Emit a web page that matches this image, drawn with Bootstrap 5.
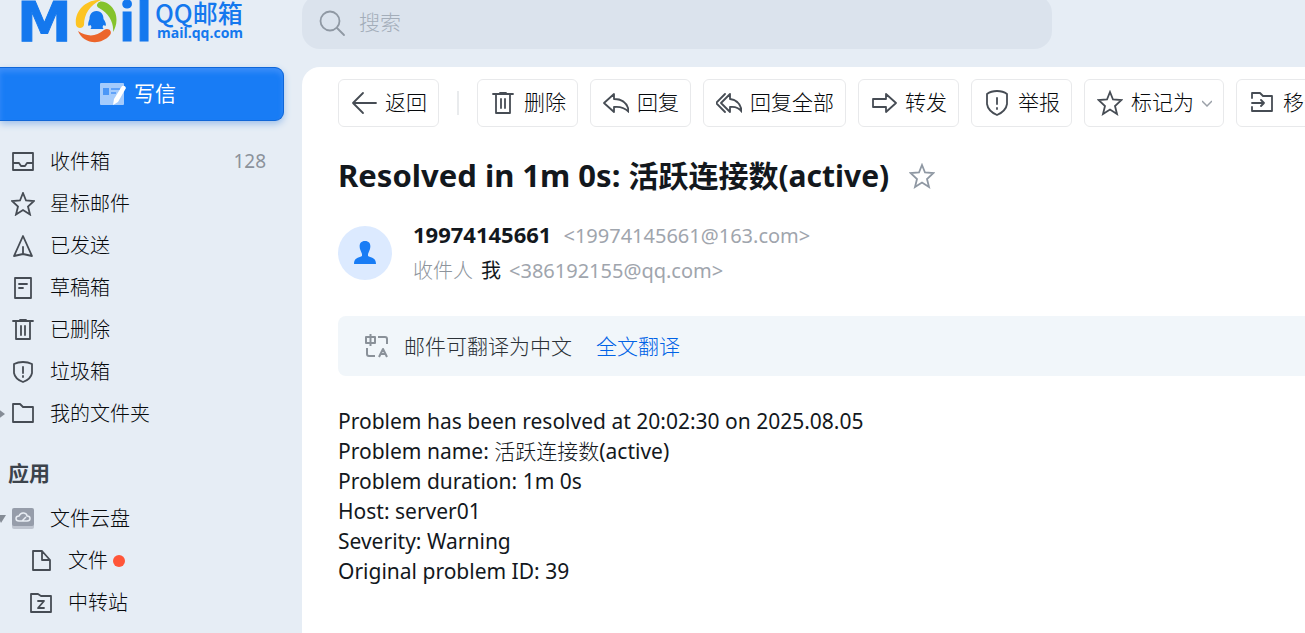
<!DOCTYPE html>
<html lang="zh-CN">
<head>
<meta charset="utf-8">
<meta name="viewport" content="width=device-width, initial-scale=1">
<title>QQ邮箱</title>
<link href="https://cdn.jsdelivr.net/npm/bootstrap@5.3.0/dist/css/bootstrap.min.css" rel="stylesheet">
<style>
body{font-family:"Noto Sans","Noto Sans CJK SC",sans-serif;background:#e6edf5;color:#13181d;font-size:21px;line-height:30px}
svg{display:block;flex:none}
.ico{fill:none;stroke:#464c54;stroke-width:1.8;stroke-linejoin:round;stroke-linecap:round}
.ico-pale{stroke:#8f98a3}
.side{width:302px;flex:none}
.brand-row{height:67px;padding-left:18px}
.compose{width:284px;height:54px;background:#187cf5;border:1px solid #1067d8;border-left:0;border-radius:0 9px 9px 0;color:#fff;font-size:21px;padding:0 7px 0 0;box-shadow:0 3px 7px #9fc0ea,inset 0 4px 5px #3a8df8}
.compose:hover{background:#1271e6;color:#fff}
.folders{margin-top:20px;font-size:20px;font-weight:300}
.folders a{height:42px;color:#06090c;text-decoration:none;padding-left:11px;position:relative}
.folders a.sub-item{padding-left:29px}
.folders .label-text{margin-left:15px}
.count{color:#8b929b;padding-right:36px;font-size:19px;line-height:28px;padding-bottom:2px;font-weight:400}
.twist{position:absolute;left:-3px;top:13px}
.group-title{font-size:21px;font-weight:700;color:#3c434b;padding:18px 0 5px 8px;line-height:40px}
.dot{width:12px;height:12px;background:#ff5538;margin-left:5px}
.search{max-width:750px;height:54px;margin-top:-5px;background:#dbe3ed;border-radius:18px;padding:2px 16px 0}
.search input{font-size:21px;font-weight:300;padding:0;margin-left:13px;color:#13181d}
.search input::placeholder{color:#a3adb9;opacity:1}
.content-col{min-width:0}
.sheet{margin-top:18px;background:#fff;border-top-left-radius:18px;padding:12px 0 30px 36px}
.tools{gap:12px}
.tools .btn{height:48px;padding:0 11px 0 12px;border:1px solid #e8e9eb;border-radius:6px;font-size:21px;font-weight:300;color:#06090c;flex:none;background:#fff}
.tools .btn:hover{background:#f3f5f8}
.rule{width:2px;height:24px;background:#e9ebed;margin:0 6px;flex:none}
.subject-row{margin-top:28px;gap:20px}
.subject{font-size:31px;font-weight:700;line-height:40px}
.subject span{font-size:30px}
.from-row{margin-top:23px;gap:21px}
.avatar-disc{width:54px;height:54px;background:#dceaff}
.people{row-gap:5px}
.sender{font-size:22px;line-height:30px}
.rcpt{font-size:20px;line-height:30px}
.pale{color:#8d949c;font-weight:300}
.addr{font-size:20px;color:#9fa5ad}
.trans{height:60px;background:#f1f6fa;border-radius:8px 0 0 8px;margin-top:30px;padding-left:26px;color:#2b3137;font-weight:300}
.trans a{color:#0062e6;text-decoration:none}
.trans span{margin-left:14px}
.msg{margin-top:30px}
.msg span{font-weight:300}
</style>
</head>
<body>
<div class="d-flex min-vh-100 overflow-hidden">
<aside class="side">
  <div class="brand-row">
    <svg class="overflow-visible" width="230" height="45" viewBox="18 0 230 45" role="img" aria-label="QQ邮箱">
      <g fill="#1478ee">
        <text x="17" y="41" font-family="DejaVu Sans" font-weight="700" font-size="55" stroke="#1478ee">M</text>
        <text x="119 136" y="41" font-family="Open Sans" font-weight="700" font-size="53" stroke="#1478ee">il</text>
        <text x="155" y="23" font-family="Noto Sans CJK SC" font-weight="500" font-size="25">QQ邮箱</text>
        <text x="157" y="38" font-family="Open Sans" font-weight="700" font-size="14">mail.qq.com</text>
      </g>
      <circle cx="96.500" cy="21" r="25" fill="#e6edf5"/>
      <path fill="#fdc422" d="M101 0C86-1 74 11 76 25c1 4 7 4 8 0C84 14 90 5 101 0z"/>
      <path fill="#85c32c" d="M98 3c3-4 13 0 17 9 3 8 1 15-2 20 1-9-4-19-14-24-2-1-3-3-1-5z"/>
      <path fill="#ec652b" d="M78 31c9 6 18 6 26-1 4-3 9 1 6 5-9 11-27 9-32-4z"/>
      <path fill="#1478ee" d="M96.500 11c5 0 7 4 7 8 2 3 3 5 2 7l-2-1-1 2 1 2h-13l1-2-1-2-2 1c-1-2 0-4 1-7 0-4 2-8 7-8z"/>
    </svg>
  </div>
  <button type="button" class="btn compose d-flex align-items-center justify-content-center gap-2">
    <svg width="26" height="24" viewBox="0 0 26 24"><rect y="1" width="24" height="22" rx="1" fill="#a4cbfc"/><path d="M3 6h6v7H3z" fill="#4b97f7"/><path d="M11 7h9M11 11h5" stroke="#4b97f7" stroke-width="1.500"/><path fill="#fff" d="M22 4q3-1 4 2l-8 14-5 3 1-6z"/></svg>
    <span>写信</span>
  </button>
  <nav class="folders d-flex flex-column">
    <a href="#" class="d-flex align-items-center"><svg class="ico" width="24" height="24" viewBox="0 0 24 24"><path d="M2 3h20v17H2zM2 13h6l2 3h4l2-3h6"/></svg><span class="label-text">收件箱</span><span class="count ms-auto">128</span></a>
    <a href="#" class="d-flex align-items-center"><svg class="ico" width="24" height="24" viewBox="0 0 24 24"><path stroke-linejoin="miter" d="M12 1l3 7.500 8 .5-6 5.500 2 8-7-4.500-7 4.500 2-8L1 9l8-.5z"/></svg><span class="label-text">星标邮件</span></a>
    <a href="#" class="d-flex align-items-center"><svg class="ico" width="24" height="24" viewBox="0 0 24 24"><path d="M12 2l9 20-9-2-9 2zM12 13v7"/></svg><span class="label-text">已发送</span></a>
    <a href="#" class="d-flex align-items-center"><svg class="ico" width="24" height="24" viewBox="0 0 24 24"><path d="M4 2h16v20H4zM8 8h8M8 12h4"/></svg><span class="label-text">草稿箱</span></a>
    <a href="#" class="d-flex align-items-center"><svg class="ico" width="24" height="24" viewBox="0 0 24 24"><path d="M2 3h20M9 2h6M5 4v17h14V4M10 8v9M14 8v9"/></svg><span class="label-text">已删除</span></a>
    <a href="#" class="d-flex align-items-center"><svg class="ico" width="24" height="24" viewBox="0 0 24 24"><path d="M12 2q5 0 9 2v9q-1 6-9 9-8-3-9-9V4q4-2 9-2zM12 7v6M12 16v1"/></svg><span class="label-text">垃圾箱</span></a>
    <a href="#" class="d-flex align-items-center"><svg class="twist" width="8" height="16" viewBox="0 0 8 16"><path fill="#858c96" d="M0 2l8 6-8 6z"/></svg><svg class="ico" width="24" height="24" viewBox="0 0 24 24"><path d="M2 2h7l3 3h10v15H2z"/></svg><span class="label-text">我的文件夹</span></a>
    <div class="group-title">应用</div>
    <a href="#" class="d-flex align-items-center"><svg class="twist" width="9" height="16" viewBox="0 0 9 16"><path fill="#858c96" d="M0 4h9l-5 8z"/></svg><svg width="24" height="24" viewBox="0 0 24 24"><rect x="1" y="4" width="22" height="18" rx="2" fill="#bfc5d0"/><rect x="1" y="1" width="22" height="18" rx="2" fill="#969daa"/><path d="M8 14c-4 0-4-5 0-5 2-5 8-3 8 0 4 0 4 5 0 5zM11 14l4-4" fill="none" stroke="#e8edf4" stroke-width="1.500"/></svg><span class="label-text">文件云盘</span></a>
    <a href="#" class="sub-item d-flex align-items-center"><svg class="ico" width="24" height="24" viewBox="0 0 24 24"><path d="M4 2h9l8 9v10H4zM13 2v9h8"/></svg><span class="label-text">文件</span><span class="dot rounded-circle"></span></a>
    <a href="#" class="sub-item d-flex align-items-center"><svg class="ico" width="24" height="24" viewBox="0 0 24 24"><path d="M2 3h7l3 2h10v16H2zM9 10h6l-6 7h6"/></svg><span class="label-text">中转站</span></a>
  </nav>
</aside>
<main class="content-col flex-grow-1 d-flex flex-column">
  <form class="search d-flex align-items-center" role="search">
    <svg class="ico ico-pale" width="28" height="28" viewBox="0 0 28 28"><circle cx="12" cy="12" r="9.500"/><path d="M19 19l7 7"/></svg>
    <input type="search" class="form-control border-0 bg-transparent shadow-none" placeholder="搜索" aria-label="搜索">
  </form>
  <section class="sheet flex-grow-1">
    <div class="tools d-flex align-items-center overflow-hidden">
      <button type="button" class="btn d-flex align-items-center gap-2"><svg class="ico" width="26" height="26" viewBox="0 0 26 26"><path d="M25 13H2M12 3L2 13l10 10"/></svg>返回</button>
      <div class="rule"></div>
      <button type="button" class="btn d-flex align-items-center gap-2"><svg class="ico" width="26" height="26" viewBox="0 0 26 26"><path d="M3 4h20M10 3h6M6 4v19h14V4M11 9v9M15 9v9"/></svg>删除</button>
      <button type="button" class="btn d-flex align-items-center gap-2"><svg class="ico" width="26" height="26" viewBox="0 0 26 26"><path d="M1 13L11 4v5q13 0 15 13-6-6-15-5v5z"/></svg>回复</button>
      <button type="button" class="btn d-flex align-items-center gap-2"><svg class="ico" width="26" height="26" viewBox="0 0 26 26"><path d="M5 13l9-9v5q10 1 12 13-4-6-12-5v5zM9 4l-9 9 9 9"/></svg>回复全部</button>
      <button type="button" class="btn d-flex align-items-center gap-2"><svg class="ico" width="26" height="26" viewBox="0 0 26 26"><path d="M2 9h13V4l10 9-10 9v-5H2z"/></svg>转发</button>
      <button type="button" class="btn d-flex align-items-center gap-2"><svg class="ico" width="26" height="26" viewBox="0 0 26 26"><path d="M13 1q6 0 10 3v10q-1 7-10 11-9-4-10-11V4q4-3 10-3zM13 8v6M13 18v1"/></svg>举报</button>
      <button type="button" class="btn d-flex align-items-center gap-2"><svg class="ico" width="26" height="26" viewBox="0 0 26 26"><path stroke-linejoin="miter" d="M13 2l3 7.500 8.500.5-6.500 6 2 8-7-4.500-7 4.500 2-8-6.500-6 8.500-.5z"/></svg>标记为<svg width="10" height="12" viewBox="0 0 10 12"><path d="M0 4l5 5 5-5" fill="none" stroke="#9aa0a8" stroke-width="1.500"/></svg></button>
      <button type="button" class="btn d-flex align-items-center gap-2"><svg class="ico" width="26" height="26" viewBox="0 0 26 26"><path d="M3 8V3h8l3 3h9v15H3v-4M3 13h12M12 10l3 3-3 3"/></svg>移动到</button>
    </div>
    <div class="subject-row d-flex align-items-center">
      <h1 class="subject m-0">Resolved in 1m 0s: <span>活跃连接数(active)</span></h1>
      <svg class="ico ico-pale" width="26" height="26" viewBox="0 0 26 26"><path stroke-linejoin="miter" d="M13 2l3 7.500 8.500.5-6.500 6 2 8-7-4.500-7 4.500 2-8-6.500-6 8.500-.5z"/></svg>
    </div>
    <div class="from-row d-flex align-items-center">
      <div class="avatar-disc rounded-circle d-flex align-items-center justify-content-center"><svg width="24" height="26" viewBox="0 0 24 26"><path fill="#187cf5" d="M12 1c5 0 6 4 5 8l-2 5v2c4 2 8 2 8 8H1c0-6 4-6 8-8v-2L7 9C6 5 7 1 12 1z"/></svg></div>
      <div class="people d-flex flex-column">
        <div class="sender d-flex align-items-baseline gap-2"><b class="me-1">19974145661</b> <span class="addr">&lt;19974145661@163.com&gt;</span></div>
        <div class="rcpt d-flex align-items-baseline gap-2"><span class="pale">收件人</span> <span>我</span> <span class="addr">&lt;386192155@qq.com&gt;</span></div>
      </div>
    </div>
    <div class="trans d-flex align-items-center">
      <svg width="26" height="26" viewBox="0 0 26 26" fill="none" stroke="#8a9199" stroke-width="2" stroke-linejoin="round"><path d="M2 4h9v6H2zM6.500 1v12M14 4h7q2 0 2 2v5M3 15v6q0 2 2 2h6M15 24l4-8 4 8M16 21h6"/></svg>
      <span>邮件可翻译为中文</span><a href="#" class="ms-4">全文翻译</a>
    </div>
    <div class="msg">Problem has been resolved at 20:02:30 on 2025.08.05<br>Problem name: <span>活跃连接数</span>(active)<br>Problem duration: 1m 0s<br>Host: server01<br>Severity: Warning<br>Original problem ID: 39</div>
  </section>
</main>
</div>
<script src="https://cdn.jsdelivr.net/npm/bootstrap@5.3.0/dist/js/bootstrap.bundle.min.js"></script>
</body>
</html>
